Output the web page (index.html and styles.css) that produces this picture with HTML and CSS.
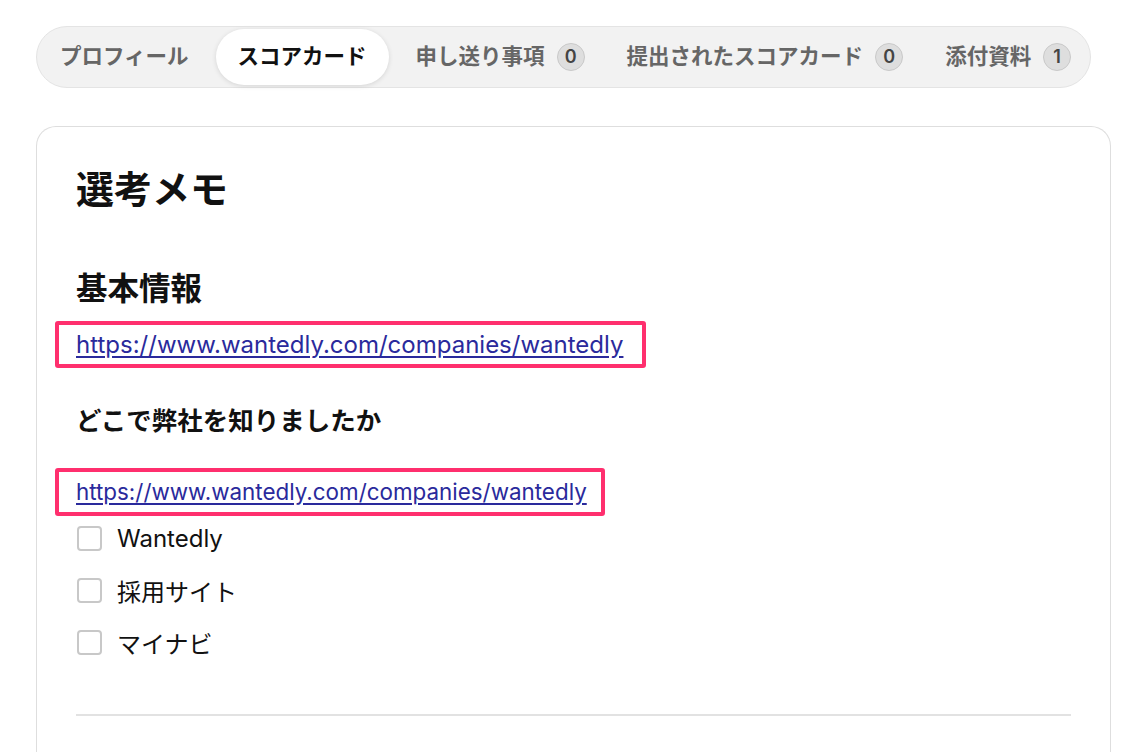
FILE: index.html
```html
<!DOCTYPE html>
<html lang="ja">
<head>
<meta charset="utf-8">
<link rel="stylesheet" href="styles.css">
</head>
<body>
<div class="page">
  <nav class="tabs">
    <div class="tab">プロフィール</div>
    <div class="tab tab--active">スコアカード</div>
    <div class="tab tab--badge">申し送り事項<span class="badge">0</span></div>
    <div class="tab tab--badge">提出されたスコアカード<span class="badge">0</span></div>
    <div class="tab tab--badge">添付資料<span class="badge">1</span></div>
  </nav>

  <section class="card">
    <h1 class="title">選考メモ</h1>
    <h2 class="section-title">基本情報</h2>
    <div class="link-row">
      <span class="highlight highlight--first"><a class="link" href="#">https://www.wantedly.com/companies/wantedly</a></span>
    </div>
    <h3 class="question">どこで弊社を知りましたか</h3>
    <div class="link-row link-row--second">
      <span class="highlight highlight--second"><a class="link" href="#">https://www.wantedly.com/companies/wantedly</a></span>
    </div>
    <ul class="options">
      <li class="option"><span class="checkbox"></span><span class="option-label">Wantedly</span></li>
      <li class="option"><span class="checkbox"></span><span class="option-label">採用サイト</span></li>
      <li class="option"><span class="checkbox"></span><span class="option-label">マイナビ</span></li>
    </ul>
    <hr class="divider">
  </section>
</div>
</body>
</html>
```

FILE: styles.css
```css
* { box-sizing: border-box; }
html, body { margin: 0; padding: 0; background: #fff; }
body {
  font-family: Inter, "Noto Sans CJK JP", sans-serif;
  color: #111;
}
.page {
  padding: 26px 33px 0 36px;
}
.tabs {
  display: inline-flex;
  align-items: center;
  gap: 5px;
  padding: 2px 4px 2px 1px;
  background: #f2f2f2;
  border: 1px solid #e4e4e4;
  border-radius: 999px;
  height: 62px;
}
.tab {
  display: flex;
  align-items: center;
  height: 56px;
  padding: 0 22px 5px;
  border-radius: 999px;
  font-size: 21.5px;
  font-weight: 700;
  color: #666;
  white-space: nowrap;
}
.tab--active {
  background: #fff;
  color: #111;
  box-shadow: 0 1px 5px rgba(0,0,0,0.12);
}
.tab--badge {
  padding-right: 15px;
}
.badge {
  display: inline-flex;
  align-items: center;
  justify-content: center;
  width: 28px;
  height: 28px;
  margin-left: 12px;
  margin-top: 4px;
  border-radius: 50%;
  background: #dedede;
  border: 1px solid #c9c9c9;
  color: #444;
  font-family: Inter, sans-serif;
  font-size: 18px;
  font-weight: 600;
}
.card {
  margin-top: 38px;
  border: 1px solid #dedede;
  border-bottom: none;
  border-radius: 20px 20px 0 0;
  padding: 37px 39px 40px 39px;
  min-height: 640px;
}
.title {
  margin: 0;
  font-size: 38px;
  line-height: 50px;
  font-weight: 700;
  color: #111;
}
.section-title {
  margin: 53px 0 0;
  font-size: 31.5px;
  line-height: 44px;
  font-weight: 700;
}
.link-row {
  margin-top: 10px;
  line-height: 0;
}
.highlight {
  display: inline-block;
  margin-left: -21px;
  border: 4px solid #ff2f6e;
  border-radius: 3px;
  padding: 7px 19px 7px 17px;
  line-height: 25px;
}
.highlight--first { font-size: 24px; }
.highlight--second { font-size: 22.4px; padding: 7px 14px 8px 17px; }
.link {
  font-size: inherit;
  line-height: 25px;
  color: #2a2a9c;
  text-decoration: underline;
  text-underline-offset: 3px;
}
.question {
  margin: 36px 0 0;
  font-size: 25.5px;
  line-height: 34px;
  font-weight: 700;
}
.link-row--second {
  margin-top: 30px;
}
.options {
  list-style: none;
  margin: -4px 0 0;
  padding: 0;
}
.option {
  display: flex;
  align-items: center;
  gap: 15px;
  height: 52px;
}
.checkbox {
  width: 25px;
  height: 25px;
  margin-left: 1px;
  border: 2px solid #c8c8c8;
  border-radius: 4px;
  background: #fff;
}
.option-label {
  font-size: 24px;
  color: #111;
}
.divider {
  margin: 46px 0 0;
  border: none;
  border-top: 2px solid #e2e2e2;
}
```
